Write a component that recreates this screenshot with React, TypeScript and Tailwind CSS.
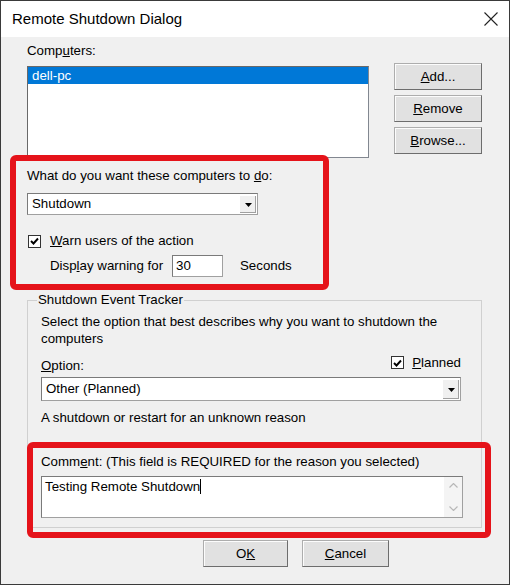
import React from "react";

const ff = { fontFamily: '"Liberation Sans", Arial, sans-serif' };

const Btn = ({ children, w }: { children: React.ReactNode; w: string }) => (
  <div
    className={
      w +
      " h-[27px] flex items-center justify-center bg-[#e1e1e1] border border-[#adadad] border-r-[#6d6d6d] border-b-[#6d6d6d] shadow-[inset_1px_1px_0_#fcfcfc] text-[13.3px] text-black"
    }
  >
    {children}
  </div>
);

const Arrow = () => (
  <div className="w-[17px] h-full flex items-center justify-center bg-[#f0f0f0] border-l border-t border-[#ffffff] shadow-[inset_-1px_-1px_0_#a0a0a0]">
    <svg width="7" height="4" viewBox="0 0 7 4">
      <path d="M0 0 H7 L3.5 4 Z" fill="#000" />
    </svg>
  </div>
);

const Combo = ({ text, w, h }: { text: string; w: string; h: string }) => (
  <div
    className={
      w +
      " " +
      h +
      " flex bg-white border border-[#a0a0a0] border-t-[#7a7a7a] border-l-[#7a7a7a] p-[1px]"
    }
  >
    <div className="flex-1 pl-[3px] leading-[18px] flex items-center">{text}</div>
    <Arrow />
  </div>
);

const Check = () => (
  <div className="w-[13px] h-[13px] bg-white border border-[#333] flex items-center justify-center">
    <svg width="9" height="8" viewBox="0 0 9 8">
      <path d="M1 4 L3.5 6.5 L8 1.5" stroke="#000" strokeWidth="1.9" fill="none" />
    </svg>
  </div>
);

export default function App() {
  return (
    <div
      className="w-[510px] h-[585px] border border-[#3a3a3a] bg-[#f0f0f0] relative overflow-hidden text-black text-[13.3px]"
      style={ff}
    >
      {/* title bar */}
      <div className="h-[36px] bg-white flex items-center justify-between pl-[11px] pr-[11px]">
        <span className="text-[15px] leading-[18px]">Remote Shutdown Dialog</span>
        <svg width="14" height="14" viewBox="0 0 14 14">
          <path d="M0.5 0.5 L13.5 13.5 M13.5 0.5 L0.5 13.5" stroke="#222" strokeWidth="1.1" />
        </svg>
      </div>

      <div className="pl-[26px] pr-[27px]">
        <div className="mt-[6px] leading-[16px]">
          Comp<u>u</u>ters:
        </div>
        <div className="flex justify-between mt-[7px]">
          <div className="w-[342px] h-[92px] bg-white border border-[#828790] border-t-[#696969] border-l-[#696969]">
            <div className="h-[17px] bg-[#0078d7] text-white pl-[4px] leading-[17px]">dell-pc</div>
          </div>
          <div className="flex flex-col gap-[5px] -mt-[3px]">
            <Btn w="w-[88px]">
              <span>
                <u>A</u>dd...
              </span>
            </Btn>
            <Btn w="w-[88px]">
              <span>
                <u>R</u>emove
              </span>
            </Btn>
            <Btn w="w-[88px]">
              <span>
                <u>B</u>rowse...
              </span>
            </Btn>
          </div>
        </div>

        <div className="mt-[10px] leading-[16px]">
          What do you want these computers to <u>d</u>o:
        </div>
        <div className="mt-[9px]">
          <Combo text="Shutdown" w="w-[231px]" h="h-[22px]" />
        </div>
        <div className="mt-[18px] flex items-center h-[16px] pl-[1px]">
          <Check />
          <span className="ml-[9px] leading-[16px]">
            <u>W</u>arn users of the action
          </span>
        </div>
        <div className="mt-[6px] flex items-center h-[22px] pl-[23px]">
          <span className="w-[122px]">
            Disp<u>l</u>ay warning for
          </span>
          <div className="w-[51px] h-[22px] bg-white border border-[#a0a0a0] border-t-[#7a7a7a] border-l-[#7a7a7a] pl-[3px] leading-[20px]">
            30
          </div>
          <span className="ml-[17px]">Seconds</span>
        </div>

        <fieldset className="mt-[15px] border border-[#d0d0d0] pl-[13px] pr-[18px] pb-[9px] w-[455px]">
          <legend className="-ml-[4px] px-[1px] leading-[16px]">Shutdown Event Tracker</legend>
          <div className="mt-[5px] leading-[17px]">
            Select the option that best describes why you want to shutdown the
            <br />
            computers
          </div>
          <div className="mt-[7px] flex justify-between items-center h-[17px]">
            <span className="pt-[6px]">
              <u>O</u>ption:
            </span>
            <div className="flex items-center mr-[2px]">
              <Check />
              <span className="ml-[8px]">
                <u>P</u>lanned
              </span>
            </div>
          </div>
          <div className="mt-[6px]">
            <Combo text="Other (Planned)" w="w-[420px]" h="h-[24px]" />
          </div>
          <div className="mt-[9px] leading-[16px]">A shutdown or restart for an unknown reason</div>
          <div className="mt-[28px] leading-[16px]">
            Comm<u>e</u>nt: (This field is REQUIRED for the reason you selected)
          </div>
          <div className="mt-[6px] w-[422px] h-[42px] bg-white border border-[#a0a0a0] border-t-[#7a7a7a] border-l-[#7a7a7a] flex">
            <div className="flex-1 pl-[3px] pt-[2px] leading-[16px]">
              Testing Remote Shutdown
              <span className="inline-block w-[1px] h-[15px] bg-black align-[-3px]" />
            </div>
            <div className="w-[18px] bg-[#f4f4f4] flex flex-col items-center justify-between py-[6px]">
              <svg width="9" height="5" viewBox="0 0 9 5">
                <path d="M0.5 4.5 L4.5 0.5 L8.5 4.5" stroke="#b8b8b8" strokeWidth="1.2" fill="none" />
              </svg>
              <svg width="9" height="5" viewBox="0 0 9 5">
                <path d="M0.5 0.5 L4.5 4.5 L8.5 0.5" stroke="#b8b8b8" strokeWidth="1.2" fill="none" />
              </svg>
            </div>
          </div>
        </fieldset>

        <div className="mt-[12px] flex gap-[14px] pl-[176px]">
          <Btn w="w-[85px]">
            <span>
              O<u>K</u>
            </span>
          </Btn>
          <Btn w="w-[87px]">
            <span>
              <u>C</u>ancel
            </span>
          </Btn>
        </div>
      </div>

      {/* red annotation boxes drawn over the screenshot */}
      <div className="absolute left-[9px] top-[154px] w-[319px] h-[135px] border-[6px] border-[#e5131a] rounded-[6px]" />
      <div className="absolute left-[26px] top-[441px] w-[464px] h-[96px] border-[6px] border-[#e5131a] rounded-[6px]" />
    </div>
  );
}
